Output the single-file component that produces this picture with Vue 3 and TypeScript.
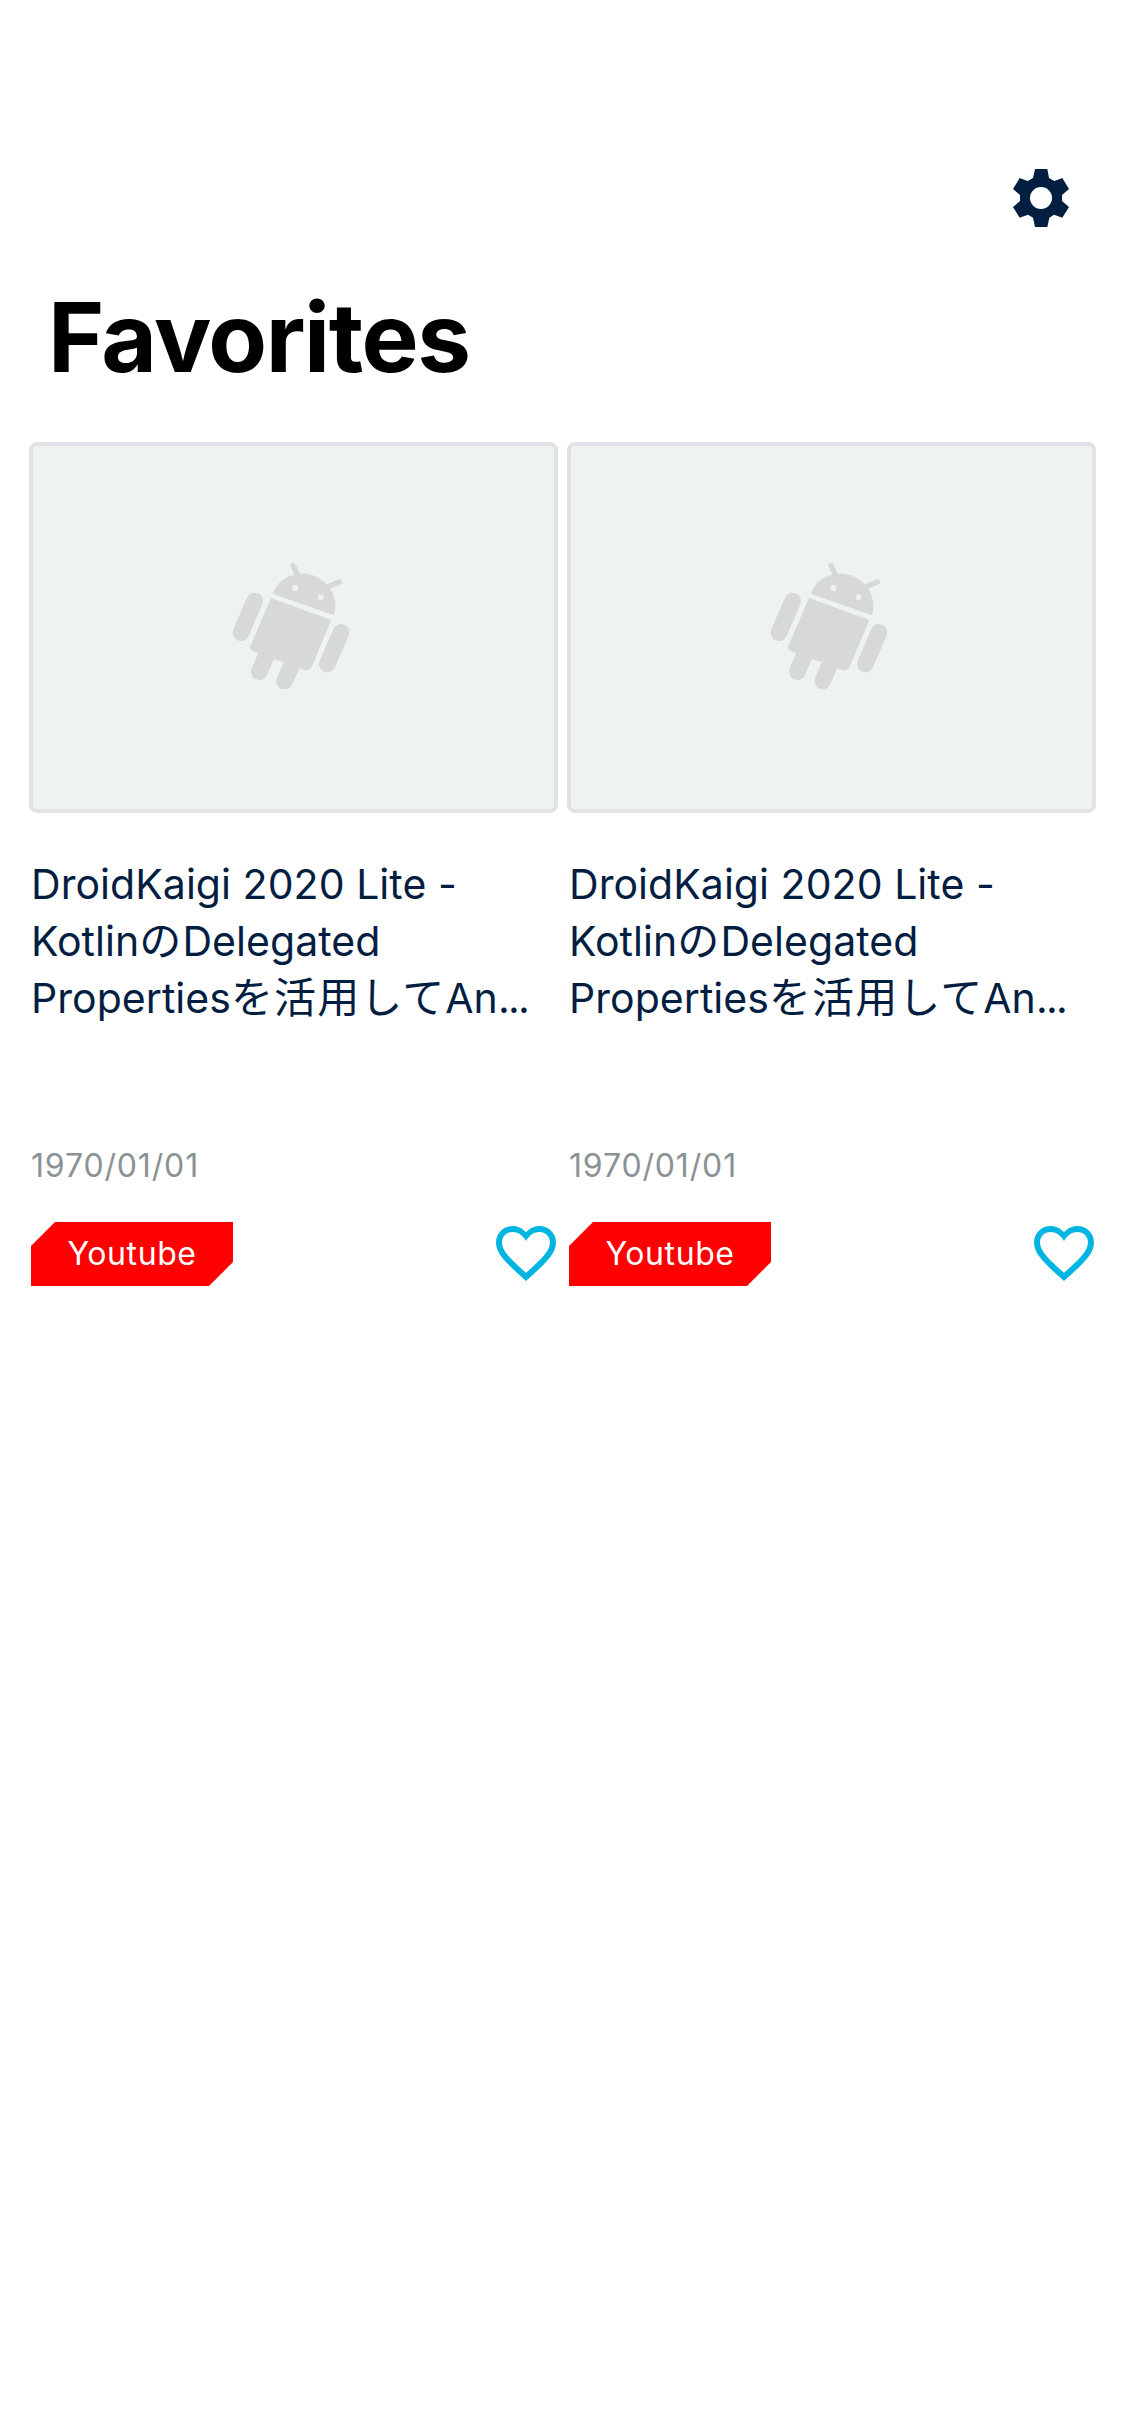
<script setup lang="ts">
interface Run {
  text: string
  kind?: 'cjk' | 'dots'
}
interface Session {
  id: number
  lines: Run[][]
  date: string
  tag: string
}

const lines: Run[][] = [
  [{ text: 'DroidKaigi 2020 Lite -' }],
  [{ text: 'Kotlin' }, { text: 'の', kind: 'cjk' }, { text: 'Delegated' }],
  [{ text: 'Properties' }, { text: 'を活用して', kind: 'cjk' }, { text: 'An' }, { text: '...', kind: 'dots' }],
]
const sessions: Session[] = [1, 2].map((id) => ({ id, lines, date: '1970/01/01', tag: 'Youtube' }))
</script>

<template>
  <main class="screen">
    <header class="bar">
      <svg class="gear" viewBox="69 57 168 174" aria-label="Settings">
        <path
          fill-rule="evenodd"
          d="M135 57H172L177 84L193 93L217 84L237 117L216 135V153L237 171L217 203L192 194L178 203L172 231H135L129 203L114 194L89 203L69 171L90 153V135L69 117L89 84L113 93L129 84ZM153 111a33 33 0 1 0 0 66a33 33 0 1 0 0-66Z"
        />
      </svg>
    </header>
    <h1 class="heading">Favorites</h1>
    <section class="grid">
      <article v-for="s in sessions" :key="s.id" class="card">
        <div class="thumb">
          <svg class="droid" viewBox="0 0 480 510">
            <path d="M183 174L364 240L306 378Q300 394 284 390L268 385L222 367L191 357L145 340L130 334Q117 328 121 318Z" />
            <path d="M188 161A97 92 20 0 1 371 226Z" />
            <path class="limbs" d="M134 183L93 278M393 277L352 372M172 340L148 395M248 368L224 423" />
            <path class="antennae" d="M249 76L264 108M388 126L355 140" />
            <g class="eyes">
              <rect x="248" y="136" width="16" height="16" transform="rotate(20 256 144)" />
              <rect x="324" y="164" width="16" height="16" transform="rotate(20 332 172)" />
            </g>
          </svg>
        </div>
        <h2 class="title">
          <span v-for="(line, i) in s.lines" :key="i" class="line"
            ><span v-for="(run, j) in line" :key="j" :class="run.kind">{{ run.text }}</span></span
          >
        </h2>
        <p class="date">{{ s.date }}</p>
        <footer class="foot">
          <span class="tag">{{ s.tag }}</span>
          <svg class="heart" viewBox="2 3 20 18.35" aria-label="Favorite">
            <path
              d="M16.5 3c-1.74 0-3.41.81-4.5 2.09C10.91 3.81 9.24 3 7.5 3 4.42 3 2 5.42 2 8.5c0 3.78 3.4 6.86 8.55 11.54L12 21.35l1.45-1.32C18.6 15.36 22 12.28 22 8.5 22 5.42 19.58 3 16.5 3zm-4.4 15.55l-.1.1-.1-.1C7.14 14.24 4 11.39 4 8.5 4 6.5 5.5 5 7.5 5c1.74 0 3.5 1.1 4.5 3C13 6.1 14.76 5 16.5 5c2 0 3.5 1.5 3.5 3.5 0 2.89-3.14 5.74-7.9 10.05z"
            />
          </svg>
        </footer>
      </article>
    </section>
  </main>
</template>

<style>
body {
  margin: 0;
  background: #fff;
}
</style>

<style scoped>
.screen {
  box-sizing: border-box;
  width: 1125px;
  height: 2436px;
  padding-top: 169px;
  background: #fff;
  font-family: Inter, 'Noto Sans CJK JP', sans-serif;
  overflow: hidden;
}
.bar {
  display: flex;
  justify-content: flex-end;
  height: 58px;
  padding-right: 56px;
}
.gear {
  width: 56px;
  height: 58px;
  fill: #041e42;
}
.heading {
  margin: 50px 0 0 48px;
  height: 120px;
  line-height: 120px;
  font-size: 96px;
  font-weight: 700;
  letter-spacing: -1.45px;
  color: #000;
}
.grid {
  display: flex;
  gap: 13px;
  margin-top: 45px;
  padding-left: 31px;
}
.card {
  width: 525px;
}
.thumb {
  box-sizing: border-box;
  width: 529px;
  height: 371px;
  margin-left: -2px;
  border: 4px solid #e1e2e7;
  border-radius: 8px;
  background: #eef3ef;
}
.droid {
  display: block;
  width: 160px;
  height: 170px;
  margin: 94px 0 0 177px;
  fill: #d7d9d8;
}
.limbs {
  fill: none;
  stroke: #d7d9d8;
  stroke-width: 50;
  stroke-linecap: round;
}
.antennae {
  fill: none;
  stroke: #d7d9d8;
  stroke-width: 16;
  stroke-linecap: round;
}
.eyes {
  fill: #eef3ef;
}
.title {
  margin: 43px 0 0;
  font-size: 41px;
  font-weight: 400;
  letter-spacing: 0.05px;
  color: #041e42;
}
.line {
  display: block;
  height: 57px;
  line-height: 57px;
  white-space: nowrap;
}
.cjk {
  font-size: 42px;
  line-height: 1;
  letter-spacing: 1.1px;
}
.dots {
  letter-spacing: -1.7px;
}
.date {
  margin: 119px 0 0;
  height: 40px;
  line-height: 40px;
  font-size: 32px;
  letter-spacing: 0.85px;
  color: #8b9295;
}
.foot {
  display: flex;
  justify-content: space-between;
  align-items: flex-start;
  margin-top: 36px;
}
.tag {
  width: 202px;
  height: 64px;
  line-height: 64px;
  text-align: center;
  font-size: 32px;
  letter-spacing: 0.6px;
  color: #fff;
  background: #f00;
  clip-path: polygon(24px 0, 100% 0, 100% 40px, 178px 100%, 0 100%, 0 24px);
}
.heart {
  width: 60px;
  height: 55px;
  margin: 4px 0 0;
  fill: #00b5e2;
}
</style>
